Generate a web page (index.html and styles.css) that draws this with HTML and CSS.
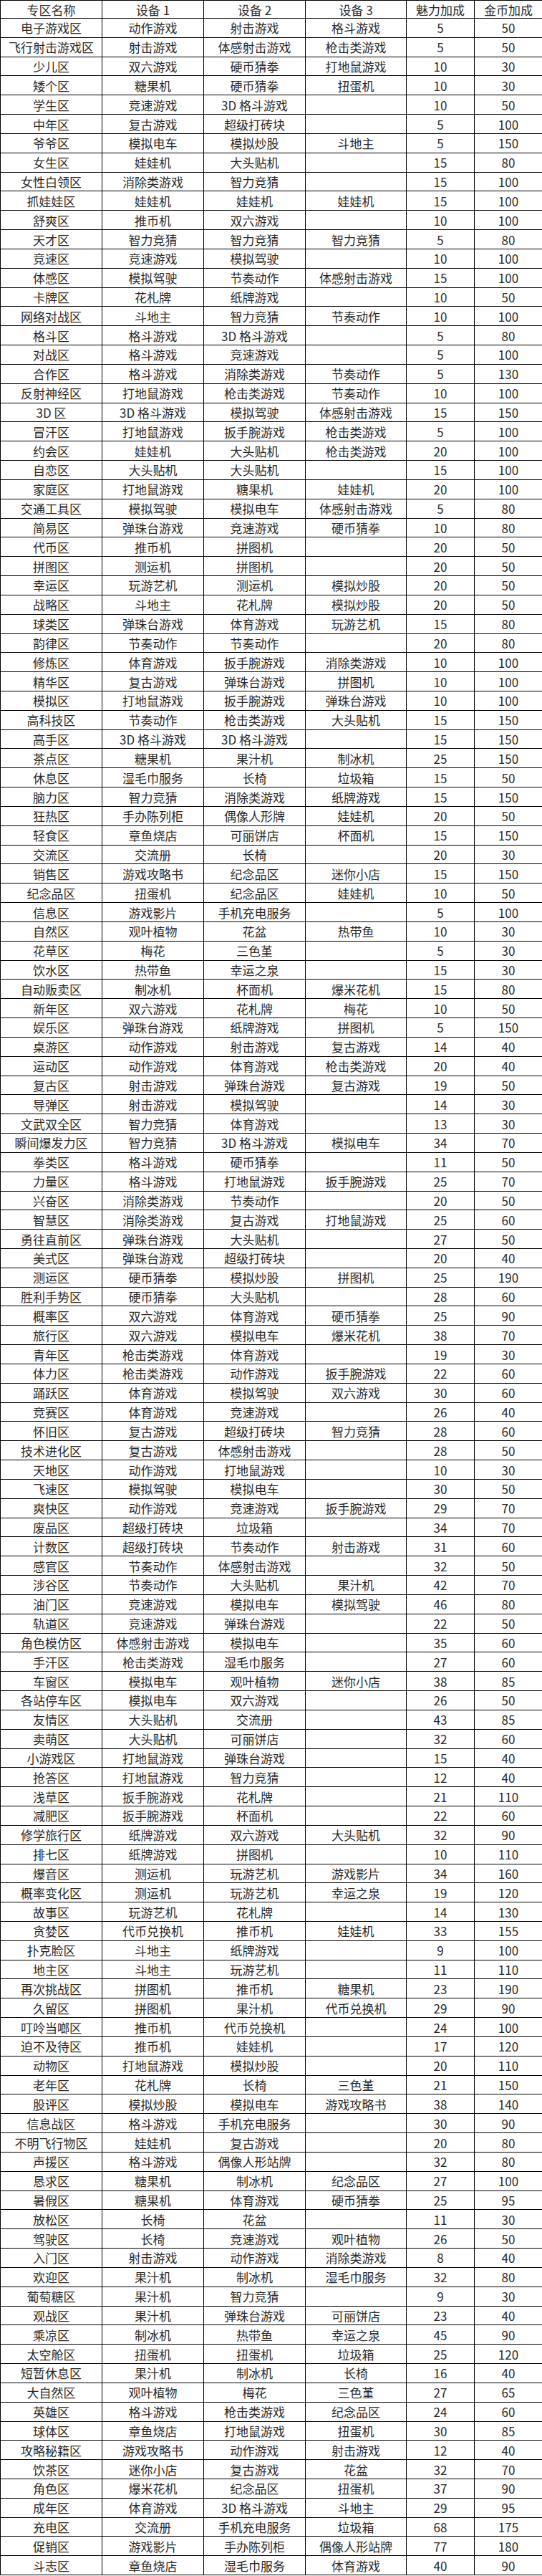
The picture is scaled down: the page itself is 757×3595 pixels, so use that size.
FILE: index.html
```html
<!DOCTYPE html>
<html lang="zh-CN">
<head>
<meta charset="utf-8">
<title>专区</title>
<link rel="stylesheet" href="styles.css">
</head>
<body>
<table class="zones">
<colgroup><col class="c-name"><col class="c-dev"><col class="c-dev"><col class="c-dev3"><col class="c-num"><col class="c-num"></colgroup>
<thead>
<tr class="head"><th>专区名称</th><th>设备 1</th><th>设备 2</th><th>设备 3</th><th>魅力加成</th><th>金币加成</th></tr>
</thead>
<tbody>
<tr><td>电子游戏区</td><td>动作游戏</td><td>射击游戏</td><td>格斗游戏</td><td>5</td><td>50</td></tr>
<tr><td>飞行射击游戏区</td><td>射击游戏</td><td>体感射击游戏</td><td>枪击类游戏</td><td>5</td><td>50</td></tr>
<tr><td>少儿区</td><td>双六游戏</td><td>硬币猜拳</td><td>打地鼠游戏</td><td>10</td><td>30</td></tr>
<tr><td>矮个区</td><td>糖果机</td><td>硬币猜拳</td><td>扭蛋机</td><td>10</td><td>30</td></tr>
<tr><td>学生区</td><td>竞速游戏</td><td>3D 格斗游戏</td><td></td><td>10</td><td>50</td></tr>
<tr><td>中年区</td><td>复古游戏</td><td>超级打砖块</td><td></td><td>5</td><td>100</td></tr>
<tr><td>爷爷区</td><td>模拟电车</td><td>模拟炒股</td><td>斗地主</td><td>5</td><td>150</td></tr>
<tr><td>女生区</td><td>娃娃机</td><td>大头贴机</td><td></td><td>15</td><td>80</td></tr>
<tr><td>女性白领区</td><td>消除类游戏</td><td>智力竞猜</td><td></td><td>15</td><td>100</td></tr>
<tr><td>抓娃娃区</td><td>娃娃机</td><td>娃娃机</td><td>娃娃机</td><td>15</td><td>100</td></tr>
<tr><td>舒爽区</td><td>推币机</td><td>双六游戏</td><td></td><td>10</td><td>100</td></tr>
<tr><td>天才区</td><td>智力竞猜</td><td>智力竞猜</td><td>智力竞猜</td><td>5</td><td>80</td></tr>
<tr><td>竞速区</td><td>竞速游戏</td><td>模拟驾驶</td><td></td><td>10</td><td>100</td></tr>
<tr><td>体感区</td><td>模拟驾驶</td><td>节奏动作</td><td>体感射击游戏</td><td>15</td><td>100</td></tr>
<tr><td>卡牌区</td><td>花札牌</td><td>纸牌游戏</td><td></td><td>10</td><td>50</td></tr>
<tr><td>网络对战区</td><td>斗地主</td><td>智力竞猜</td><td>节奏动作</td><td>10</td><td>100</td></tr>
<tr><td>格斗区</td><td>格斗游戏</td><td>3D 格斗游戏</td><td></td><td>5</td><td>80</td></tr>
<tr><td>对战区</td><td>格斗游戏</td><td>竞速游戏</td><td></td><td>5</td><td>100</td></tr>
<tr><td>合作区</td><td>格斗游戏</td><td>消除类游戏</td><td>节奏动作</td><td>5</td><td>130</td></tr>
<tr><td>反射神经区</td><td>打地鼠游戏</td><td>枪击类游戏</td><td>节奏动作</td><td>10</td><td>100</td></tr>
<tr><td>3D 区</td><td>3D 格斗游戏</td><td>模拟驾驶</td><td>体感射击游戏</td><td>15</td><td>150</td></tr>
<tr><td>冒汗区</td><td>打地鼠游戏</td><td>扳手腕游戏</td><td>枪击类游戏</td><td>5</td><td>100</td></tr>
<tr><td>约会区</td><td>娃娃机</td><td>大头贴机</td><td>枪击类游戏</td><td>20</td><td>100</td></tr>
<tr><td>自恋区</td><td>大头贴机</td><td>大头贴机</td><td></td><td>15</td><td>100</td></tr>
<tr><td>家庭区</td><td>打地鼠游戏</td><td>糖果机</td><td>娃娃机</td><td>20</td><td>100</td></tr>
<tr><td>交通工具区</td><td>模拟驾驶</td><td>模拟电车</td><td>体感射击游戏</td><td>5</td><td>80</td></tr>
<tr><td>简易区</td><td>弹珠台游戏</td><td>竞速游戏</td><td>硬币猜拳</td><td>10</td><td>80</td></tr>
<tr><td>代币区</td><td>推币机</td><td>拼图机</td><td></td><td>20</td><td>50</td></tr>
<tr><td>拼图区</td><td>测运机</td><td>拼图机</td><td></td><td>20</td><td>50</td></tr>
<tr><td>幸运区</td><td>玩游艺机</td><td>测运机</td><td>模拟炒股</td><td>20</td><td>50</td></tr>
<tr><td>战略区</td><td>斗地主</td><td>花札牌</td><td>模拟炒股</td><td>20</td><td>50</td></tr>
<tr><td>球类区</td><td>弹珠台游戏</td><td>体育游戏</td><td>玩游艺机</td><td>15</td><td>80</td></tr>
<tr><td>韵律区</td><td>节奏动作</td><td>节奏动作</td><td></td><td>20</td><td>80</td></tr>
<tr><td>修炼区</td><td>体育游戏</td><td>扳手腕游戏</td><td>消除类游戏</td><td>10</td><td>100</td></tr>
<tr><td>精华区</td><td>复古游戏</td><td>弹珠台游戏</td><td>拼图机</td><td>10</td><td>100</td></tr>
<tr><td>模拟区</td><td>打地鼠游戏</td><td>扳手腕游戏</td><td>弹珠台游戏</td><td>10</td><td>100</td></tr>
<tr><td>高科技区</td><td>节奏动作</td><td>枪击类游戏</td><td>大头贴机</td><td>15</td><td>150</td></tr>
<tr><td>高手区</td><td>3D 格斗游戏</td><td>3D 格斗游戏</td><td></td><td>15</td><td>150</td></tr>
<tr><td>茶点区</td><td>糖果机</td><td>果汁机</td><td>制冰机</td><td>25</td><td>150</td></tr>
<tr><td>休息区</td><td>湿毛巾服务</td><td>长椅</td><td>垃圾箱</td><td>15</td><td>50</td></tr>
<tr><td>脑力区</td><td>智力竞猜</td><td>消除类游戏</td><td>纸牌游戏</td><td>15</td><td>150</td></tr>
<tr><td>狂热区</td><td>手办陈列柜</td><td>偶像人形牌</td><td>娃娃机</td><td>20</td><td>50</td></tr>
<tr><td>轻食区</td><td>章鱼烧店</td><td>可丽饼店</td><td>杯面机</td><td>15</td><td>150</td></tr>
<tr><td>交流区</td><td>交流册</td><td>长椅</td><td></td><td>20</td><td>30</td></tr>
<tr><td>销售区</td><td>游戏攻略书</td><td>纪念品区</td><td>迷你小店</td><td>15</td><td>150</td></tr>
<tr><td>纪念品区</td><td>扭蛋机</td><td>纪念品区</td><td>娃娃机</td><td>10</td><td>50</td></tr>
<tr><td>信息区</td><td>游戏影片</td><td>手机充电服务</td><td></td><td>5</td><td>100</td></tr>
<tr><td>自然区</td><td>观叶植物</td><td>花盆</td><td>热带鱼</td><td>10</td><td>30</td></tr>
<tr><td>花草区</td><td>梅花</td><td>三色堇</td><td></td><td>5</td><td>30</td></tr>
<tr><td>饮水区</td><td>热带鱼</td><td>幸运之泉</td><td></td><td>15</td><td>30</td></tr>
<tr><td>自动贩卖区</td><td>制冰机</td><td>杯面机</td><td>爆米花机</td><td>15</td><td>80</td></tr>
<tr><td>新年区</td><td>双六游戏</td><td>花札牌</td><td>梅花</td><td>10</td><td>50</td></tr>
<tr><td>娱乐区</td><td>弹珠台游戏</td><td>纸牌游戏</td><td>拼图机</td><td>5</td><td>150</td></tr>
<tr><td>桌游区</td><td>动作游戏</td><td>射击游戏</td><td>复古游戏</td><td>14</td><td>40</td></tr>
<tr><td>运动区</td><td>动作游戏</td><td>体育游戏</td><td>枪击类游戏</td><td>20</td><td>40</td></tr>
<tr><td>复古区</td><td>射击游戏</td><td>弹珠台游戏</td><td>复古游戏</td><td>19</td><td>50</td></tr>
<tr><td>导弹区</td><td>射击游戏</td><td>模拟驾驶</td><td></td><td>14</td><td>30</td></tr>
<tr><td>文武双全区</td><td>智力竞猜</td><td>体育游戏</td><td></td><td>13</td><td>30</td></tr>
<tr><td>瞬间爆发力区</td><td>智力竞猜</td><td>3D 格斗游戏</td><td>模拟电车</td><td>34</td><td>70</td></tr>
<tr><td>拳类区</td><td>格斗游戏</td><td>硬币猜拳</td><td></td><td>11</td><td>50</td></tr>
<tr><td>力量区</td><td>格斗游戏</td><td>打地鼠游戏</td><td>扳手腕游戏</td><td>25</td><td>70</td></tr>
<tr><td>兴奋区</td><td>消除类游戏</td><td>节奏动作</td><td></td><td>20</td><td>50</td></tr>
<tr><td>智慧区</td><td>消除类游戏</td><td>复古游戏</td><td>打地鼠游戏</td><td>25</td><td>60</td></tr>
<tr><td>勇往直前区</td><td>弹珠台游戏</td><td>大头贴机</td><td></td><td>27</td><td>50</td></tr>
<tr><td>美式区</td><td>弹珠台游戏</td><td>超级打砖块</td><td></td><td>20</td><td>40</td></tr>
<tr><td>测运区</td><td>硬币猜拳</td><td>模拟炒股</td><td>拼图机</td><td>25</td><td>190</td></tr>
<tr><td>胜利手势区</td><td>硬币猜拳</td><td>大头贴机</td><td></td><td>28</td><td>60</td></tr>
<tr><td>概率区</td><td>双六游戏</td><td>体育游戏</td><td>硬币猜拳</td><td>25</td><td>90</td></tr>
<tr><td>旅行区</td><td>双六游戏</td><td>模拟电车</td><td>爆米花机</td><td>38</td><td>70</td></tr>
<tr><td>青年区</td><td>枪击类游戏</td><td>体育游戏</td><td></td><td>19</td><td>30</td></tr>
<tr><td>体力区</td><td>枪击类游戏</td><td>动作游戏</td><td>扳手腕游戏</td><td>22</td><td>60</td></tr>
<tr><td>踊跃区</td><td>体育游戏</td><td>模拟驾驶</td><td>双六游戏</td><td>30</td><td>60</td></tr>
<tr><td>竞赛区</td><td>体育游戏</td><td>竞速游戏</td><td></td><td>26</td><td>40</td></tr>
<tr><td>怀旧区</td><td>复古游戏</td><td>超级打砖块</td><td>智力竞猜</td><td>28</td><td>60</td></tr>
<tr><td>技术进化区</td><td>复古游戏</td><td>体感射击游戏</td><td></td><td>28</td><td>50</td></tr>
<tr><td>天地区</td><td>动作游戏</td><td>打地鼠游戏</td><td></td><td>10</td><td>30</td></tr>
<tr><td>飞速区</td><td>模拟驾驶</td><td>模拟电车</td><td></td><td>30</td><td>50</td></tr>
<tr><td>爽快区</td><td>动作游戏</td><td>竞速游戏</td><td>扳手腕游戏</td><td>29</td><td>70</td></tr>
<tr><td>废品区</td><td>超级打砖块</td><td>垃圾箱</td><td></td><td>34</td><td>70</td></tr>
<tr><td>计数区</td><td>超级打砖块</td><td>节奏动作</td><td>射击游戏</td><td>31</td><td>60</td></tr>
<tr><td>感官区</td><td>节奏动作</td><td>体感射击游戏</td><td></td><td>32</td><td>50</td></tr>
<tr><td>涉谷区</td><td>节奏动作</td><td>大头贴机</td><td>果汁机</td><td>42</td><td>70</td></tr>
<tr><td>油门区</td><td>竞速游戏</td><td>模拟电车</td><td>模拟驾驶</td><td>46</td><td>80</td></tr>
<tr><td>轨道区</td><td>竞速游戏</td><td>弹珠台游戏</td><td></td><td>22</td><td>50</td></tr>
<tr><td>角色模仿区</td><td>体感射击游戏</td><td>模拟电车</td><td></td><td>35</td><td>60</td></tr>
<tr><td>手汗区</td><td>枪击类游戏</td><td>湿毛巾服务</td><td></td><td>27</td><td>60</td></tr>
<tr><td>车窗区</td><td>模拟电车</td><td>观叶植物</td><td>迷你小店</td><td>38</td><td>85</td></tr>
<tr><td>各站停车区</td><td>模拟电车</td><td>双六游戏</td><td></td><td>26</td><td>50</td></tr>
<tr><td>友情区</td><td>大头贴机</td><td>交流册</td><td></td><td>43</td><td>85</td></tr>
<tr><td>卖萌区</td><td>大头贴机</td><td>可丽饼店</td><td></td><td>32</td><td>60</td></tr>
<tr><td>小游戏区</td><td>打地鼠游戏</td><td>弹珠台游戏</td><td></td><td>15</td><td>40</td></tr>
<tr><td>抢答区</td><td>打地鼠游戏</td><td>智力竞猜</td><td></td><td>12</td><td>40</td></tr>
<tr><td>浅草区</td><td>扳手腕游戏</td><td>花札牌</td><td></td><td>21</td><td>110</td></tr>
<tr><td>减肥区</td><td>扳手腕游戏</td><td>杯面机</td><td></td><td>22</td><td>60</td></tr>
<tr><td>修学旅行区</td><td>纸牌游戏</td><td>双六游戏</td><td>大头贴机</td><td>32</td><td>90</td></tr>
<tr><td>排七区</td><td>纸牌游戏</td><td>拼图机</td><td></td><td>10</td><td>110</td></tr>
<tr><td>爆音区</td><td>测运机</td><td>玩游艺机</td><td>游戏影片</td><td>34</td><td>160</td></tr>
<tr><td>概率变化区</td><td>测运机</td><td>玩游艺机</td><td>幸运之泉</td><td>19</td><td>120</td></tr>
<tr><td>故事区</td><td>玩游艺机</td><td>花札牌</td><td></td><td>14</td><td>130</td></tr>
<tr><td>贪婪区</td><td>代币兑换机</td><td>推币机</td><td>娃娃机</td><td>33</td><td>155</td></tr>
<tr><td>扑克脸区</td><td>斗地主</td><td>纸牌游戏</td><td></td><td>9</td><td>100</td></tr>
<tr><td>地主区</td><td>斗地主</td><td>玩游艺机</td><td></td><td>11</td><td>110</td></tr>
<tr><td>再次挑战区</td><td>拼图机</td><td>推币机</td><td>糖果机</td><td>23</td><td>190</td></tr>
<tr><td>久留区</td><td>拼图机</td><td>果汁机</td><td>代币兑换机</td><td>29</td><td>90</td></tr>
<tr><td>叮呤当啷区</td><td>推币机</td><td>代币兑换机</td><td></td><td>24</td><td>100</td></tr>
<tr><td>迫不及待区</td><td>推币机</td><td>娃娃机</td><td></td><td>17</td><td>120</td></tr>
<tr><td>动物区</td><td>打地鼠游戏</td><td>模拟炒股</td><td></td><td>20</td><td>110</td></tr>
<tr><td>老年区</td><td>花札牌</td><td>长椅</td><td>三色堇</td><td>21</td><td>150</td></tr>
<tr><td>股评区</td><td>模拟炒股</td><td>模拟电车</td><td>游戏攻略书</td><td>38</td><td>140</td></tr>
<tr><td>信息战区</td><td>格斗游戏</td><td>手机充电服务</td><td></td><td>30</td><td>90</td></tr>
<tr><td>不明飞行物区</td><td>娃娃机</td><td>复古游戏</td><td></td><td>20</td><td>80</td></tr>
<tr><td>声援区</td><td>格斗游戏</td><td>偶像人形站牌</td><td></td><td>32</td><td>80</td></tr>
<tr><td>恳求区</td><td>糖果机</td><td>制冰机</td><td>纪念品区</td><td>27</td><td>100</td></tr>
<tr><td>暑假区</td><td>糖果机</td><td>体育游戏</td><td>硬币猜拳</td><td>25</td><td>95</td></tr>
<tr><td>放松区</td><td>长椅</td><td>花盆</td><td></td><td>11</td><td>30</td></tr>
<tr><td>驾驶区</td><td>长椅</td><td>竞速游戏</td><td>观叶植物</td><td>26</td><td>50</td></tr>
<tr><td>入门区</td><td>射击游戏</td><td>动作游戏</td><td>消除类游戏</td><td>8</td><td>40</td></tr>
<tr><td>欢迎区</td><td>果汁机</td><td>制冰机</td><td>湿毛巾服务</td><td>32</td><td>80</td></tr>
<tr><td>葡萄糖区</td><td>果汁机</td><td>智力竞猜</td><td></td><td>9</td><td>30</td></tr>
<tr><td>观战区</td><td>果汁机</td><td>弹珠台游戏</td><td>可丽饼店</td><td>23</td><td>40</td></tr>
<tr><td>乘凉区</td><td>制冰机</td><td>热带鱼</td><td>幸运之泉</td><td>45</td><td>90</td></tr>
<tr><td>太空舱区</td><td>扭蛋机</td><td>扭蛋机</td><td>垃圾箱</td><td>25</td><td>120</td></tr>
<tr><td>短暂休息区</td><td>果汁机</td><td>制冰机</td><td>长椅</td><td>16</td><td>40</td></tr>
<tr><td>大自然区</td><td>观叶植物</td><td>梅花</td><td>三色堇</td><td>27</td><td>65</td></tr>
<tr><td>英雄区</td><td>格斗游戏</td><td>枪击类游戏</td><td>纪念品区</td><td>24</td><td>60</td></tr>
<tr><td>球体区</td><td>章鱼烧店</td><td>打地鼠游戏</td><td>扭蛋机</td><td>30</td><td>85</td></tr>
<tr><td>攻略秘籍区</td><td>游戏攻略书</td><td>动作游戏</td><td>射击游戏</td><td>12</td><td>40</td></tr>
<tr><td>饮茶区</td><td>迷你小店</td><td>复古游戏</td><td>花盆</td><td>32</td><td>70</td></tr>
<tr><td>角色区</td><td>爆米花机</td><td>纪念品区</td><td>扭蛋机</td><td>37</td><td>90</td></tr>
<tr><td>成年区</td><td>体育游戏</td><td>3D 格斗游戏</td><td>斗地主</td><td>29</td><td>95</td></tr>
<tr><td>充电区</td><td>交流册</td><td>手机充电服务</td><td>垃圾箱</td><td>68</td><td>175</td></tr>
<tr><td>促销区</td><td>游戏影片</td><td>手办陈列柜</td><td>偶像人形站牌</td><td>77</td><td>180</td></tr>
<tr><td>斗志区</td><td>章鱼烧店</td><td>湿毛巾服务</td><td>体育游戏</td><td>40</td><td>90</td></tr>
</tbody>
</table>
</body>
</html>
```
FILE: styles.css
```css
html, body {
  margin: 0;
  padding: 0;
  background: #ffffff;
}

.zones {
  width: 757px;
  table-layout: fixed;
  border-collapse: collapse;
  font-family: "Noto Sans CJK SC", "Noto Sans", sans-serif;
  font-size: 17px;
  line-height: 1;
  color: #2a2a2a;
}

.c-name, .c-dev { width: 142px; }
.c-dev3 { width: 141px; }
.c-num { width: 95px; }

.zones th,
.zones td {
  border: 1px solid #000000;
  padding: 0;
  text-align: center;
  vertical-align: middle;
  white-space: nowrap;
  font-weight: 400;
}

.zones .head { height: 25px; }
.zones tbody tr { height: 26.83px; }
```
